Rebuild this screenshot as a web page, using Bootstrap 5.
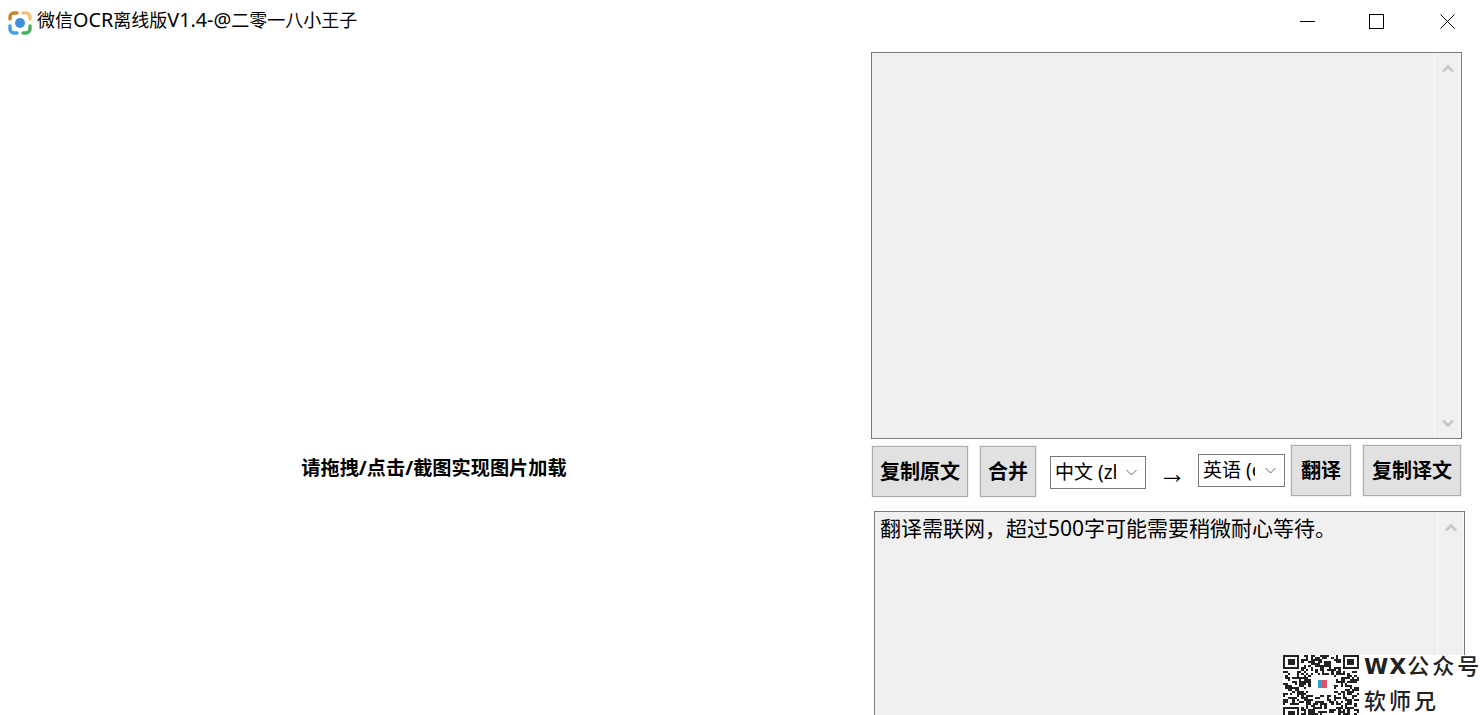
<!DOCTYPE html>
<html lang="zh-CN">
<head>
    <meta charset="UTF-8">
    <meta name="viewport" content="width=device-width, initial-scale=1.0">
    <title>微信OCR离线版V1.4-@二零一八小王子</title>
    <link href="https://cdn.jsdelivr.net/npm/bootstrap@5.3.0/dist/css/bootstrap.min.css" rel="stylesheet">
    <style>
        html, body { height: 715px; overflow: hidden; background: #fff; }
        body { font-family: "Noto Sans", "Noto Sans CJK SC", sans-serif; color: #000; }
        .app-window { height: 715px; overflow: hidden; }
        .title-bar { height: 45px; padding-left: 8px; }
        .title-text { font-size: 18px; line-height: 24px; margin-left: 5px; margin-top: -5px; white-space: nowrap; }
        .title-latin { font-size: 19.8px; }
        .win-ctrls { margin-top: -3px; margin-right: -1px; }
        .win-ctrl { width: 71px; height: 30px; }
        .main-area { height: 846px; }
        .drop-pane { width: 871px; padding-right: 3px; font-size: 19.2px; font-weight: 700; line-height: 24px; white-space: nowrap; }
        .side-pane { width: 611px; padding-top: 7px; }
        .text-box { width: 591px; background: #f0f0f0; border: 1px solid #7a7a7a; }
        .box-top { height: 387px; }
        .box-bottom { height: 300px; margin-left: 3px; margin-top: 14px; }
        .box-text { font-size: 21px; line-height: 28px; padding: 2px 5px; white-space: nowrap; }
        .scroll-col { width: 27px; border-left: 1px solid #f8f8f8; border-right: 1px solid #f8f8f8; padding: 11px 0 10px; }
        .scroll-col svg { display: block; }
        .tool-row { height: 58px; padding-top: 7px; }
        .tool-btn { height: 51px; padding: 0; border-radius: 0; background: #e1e1e1; border: 1px solid #adadad; outline: 1px solid #f0f0f0;
            font-size: 20px; font-weight: 700; line-height: 1; color: #000; white-space: nowrap; }
        .tool-btn:hover { background: #e5f1fb; border-color: #0078d7; color: #000; }
        .btn-a { width: 96px; margin-left: 1px; }
        .btn-b { width: 56px; margin-left: 12px; }
        .btn-c { width: 60px; margin-left: 6px; margin-top: -1px; }
        .btn-d { width: 98px; margin-left: 12px; margin-top: -1px; }
        .lang-select { height: 33px; border-radius: 0; border: 1px solid #7a7a7a; color: #000; font-size: 19px; line-height: 1.2;
            padding: 0 29px 0 4px; font-family: "Noto Sans", "Noto Sans CJK SC", sans-serif;
            background-position: right 8px center; background-size: 11px 7px;
            background-image: url("data:image/svg+xml,%3csvg xmlns='http://www.w3.org/2000/svg' viewBox='0 0 11 7'%3e%3cpath fill='none' stroke='%23666' d='M.5 1l5 5 5-5'/%3e%3c/svg%3e"); }
        .sel-from { width: 96px; margin-left: 14px; margin-top: 10px; }
        .sel-to { width: 87px; margin-top: 8px; }
        .arrow-sign { width: 52px; margin-top: 10px; text-align: center; font-size: 28px; line-height: 36px; font-family: "Liberation Sans", sans-serif; }
        .promo { position: absolute; left: 1283px; top: 655px; width: 199px; height: 60px; background: #fff; }
        .promo-qr { width: 76px; height: 66px; flex: none; filter: blur(.45px); }
        .promo-text { margin-left: 5px; font-family: "Liberation Sans", "Noto Sans CJK SC", sans-serif; font-size: 22px; line-height: 24px; color: #222; white-space: nowrap; font-weight: 500; }
        .promo-line { letter-spacing: 3px; height: 35px; }
        .promo-wx { font-family: "DejaVu Sans", sans-serif; font-weight: 700; letter-spacing: 1px; }
    </style>
</head>
<body>
    <div class="app-window position-relative">
        <div class="title-bar d-flex align-items-center">
            <svg width="24" height="24" viewBox="0 0 24 24" fill="none" stroke-width="3.4" stroke-linecap="round">
                <path d="M2 8V6a4 4 0 0 1 4-4h3" stroke="#c8822b"/>
                <path d="M15 2h3a4 4 0 0 1 4 4v2" stroke="#f4c27f"/>
                <path d="M2 15v3a4 4 0 0 0 4 4h3" stroke="#4a9ce2"/>
                <path d="M15 22h3a4 4 0 0 0 4-4v-3" stroke="#4cae62"/>
                <circle cx="12" cy="12" r="5" fill="#3f8fdc" stroke="none"/>
            </svg>
            <div class="title-text">微信<span class="title-latin">OCR</span>离线版<span class="title-latin">V1.4-@</span>二零一八小王子</div>
            <div class="win-ctrls ms-auto d-flex">
                <div class="win-ctrl d-flex align-items-center justify-content-center">
                    <svg class="overflow-visible" width="15" height="15" viewBox="0 0 15 15"><path d="M2 7.500h15" stroke="#000"/></svg>
                </div>
                <div class="win-ctrl d-flex align-items-center justify-content-center">
                    <svg width="15" height="15" viewBox="0 0 15 15"><rect x=".5" y=".5" width="14" height="14" fill="none" stroke="#000"/></svg>
                </div>
                <div class="win-ctrl d-flex align-items-center justify-content-center">
                    <svg width="15" height="15" viewBox="0 0 15 15"><path d="M.5.5l14 14M14.500.5l-14 14" stroke="#000" fill="none"/></svg>
                </div>
            </div>
        </div>

        <div class="main-area d-flex">
            <div class="drop-pane d-flex align-items-center justify-content-center">请拖拽/点击/截图实现图片加载</div>
            <div class="side-pane">
                <div class="text-box box-top d-flex">
                    <div class="box-text flex-grow-1"></div>
                    <div class="scroll-col d-flex flex-column justify-content-between align-items-center">
                        <svg width="12" height="9" viewBox="0 0 12 9"><path d="M1 7.500l5-5 5 5" fill="none" stroke="#c9c9c9" stroke-width="2.800"/></svg>
                        <svg width="12" height="9" viewBox="0 0 12 9"><path d="M1 1.500l5 5 5-5" fill="none" stroke="#c9c9c9" stroke-width="2.800"/></svg>
                    </div>
                </div>
                <div class="tool-row d-flex align-items-start">
                    <button type="button" class="btn tool-btn btn-a">复制原文</button>
                    <button type="button" class="btn tool-btn btn-b">合并</button>
                    <select class="form-select lang-select sel-from"><option>中文 (zh-CN)</option></select>
                    <div class="arrow-sign">→</div>
                    <select class="form-select lang-select sel-to"><option>英语 (en)</option></select>
                    <button type="button" class="btn tool-btn btn-c">翻译</button>
                    <button type="button" class="btn tool-btn btn-d">复制译文</button>
                </div>
                <div class="text-box box-bottom d-flex">
                    <div class="box-text flex-grow-1">翻译需联网，超过500字可能需要稍微耐心等待。</div>
                    <div class="scroll-col d-flex flex-column align-items-center">
                        <svg width="12" height="9" viewBox="0 0 12 9"><path d="M1 7.500l5-5 5 5" fill="none" stroke="#c9c9c9" stroke-width="2.800"/></svg>
                    </div>
                </div>
            </div>
        </div>

        <div class="promo d-flex">
            <svg class="promo-qr" id="qr" viewBox="0 0 33 33" preserveAspectRatio="none" shape-rendering="crispEdges"></svg>
            <div class="promo-text">
                <div class="promo-line"><span class="promo-wx">WX</span>公众号</div>
                <div class="promo-line">软师兄</div>
            </div>
        </div>
    </div>

    <script>
        // 水印二维码: modules are made up, only the look matters
        const qr = document.getElementById('qr');
        let seed = 2018;
        let cells = '';
        const rnd = () => { seed = (seed * 1103515245 + 12345) % 2147483648; return seed / 2147483648; };
        const inFinder = (x, y) => (x < 8 && y < 8) || (x > 24 && y < 8) || (x < 8 && y > 24);
        for (let y = 0; y < 33; y++) {
            for (let x = 0; x < 33; x++) {
                if (inFinder(x, y)) continue;
                if (rnd() < 0.5) cells += `<rect x="${x}" y="${y}" width="1" height="1"/>`;
            }
        }
        const finder = (x, y) => `<path d="M${x} ${y}h7v7h-7z" /><path fill="#fff" d="M${x + 1} ${y + 1}h5v5h-5z"/><path d="M${x + 2} ${y + 2}h3v3h-3z"/>`;
        const logo = '<path fill="#fff" d="M12 10h10v10h-10z"/><path fill="#2f9fd0" d="M15 12.500h2v4h-2z"/><path fill="#e0506a" d="M17 12.500h2v4h-2z"/>';
        qr.innerHTML = `<g fill="#222">${cells}${finder(0, 0)}${finder(26, 0)}${finder(0, 26)}</g>${logo}`;
    </script>
    <script src="https://cdn.jsdelivr.net/npm/bootstrap@5.3.0/dist/js/bootstrap.bundle.min.js"></script>
</body>
</html>
